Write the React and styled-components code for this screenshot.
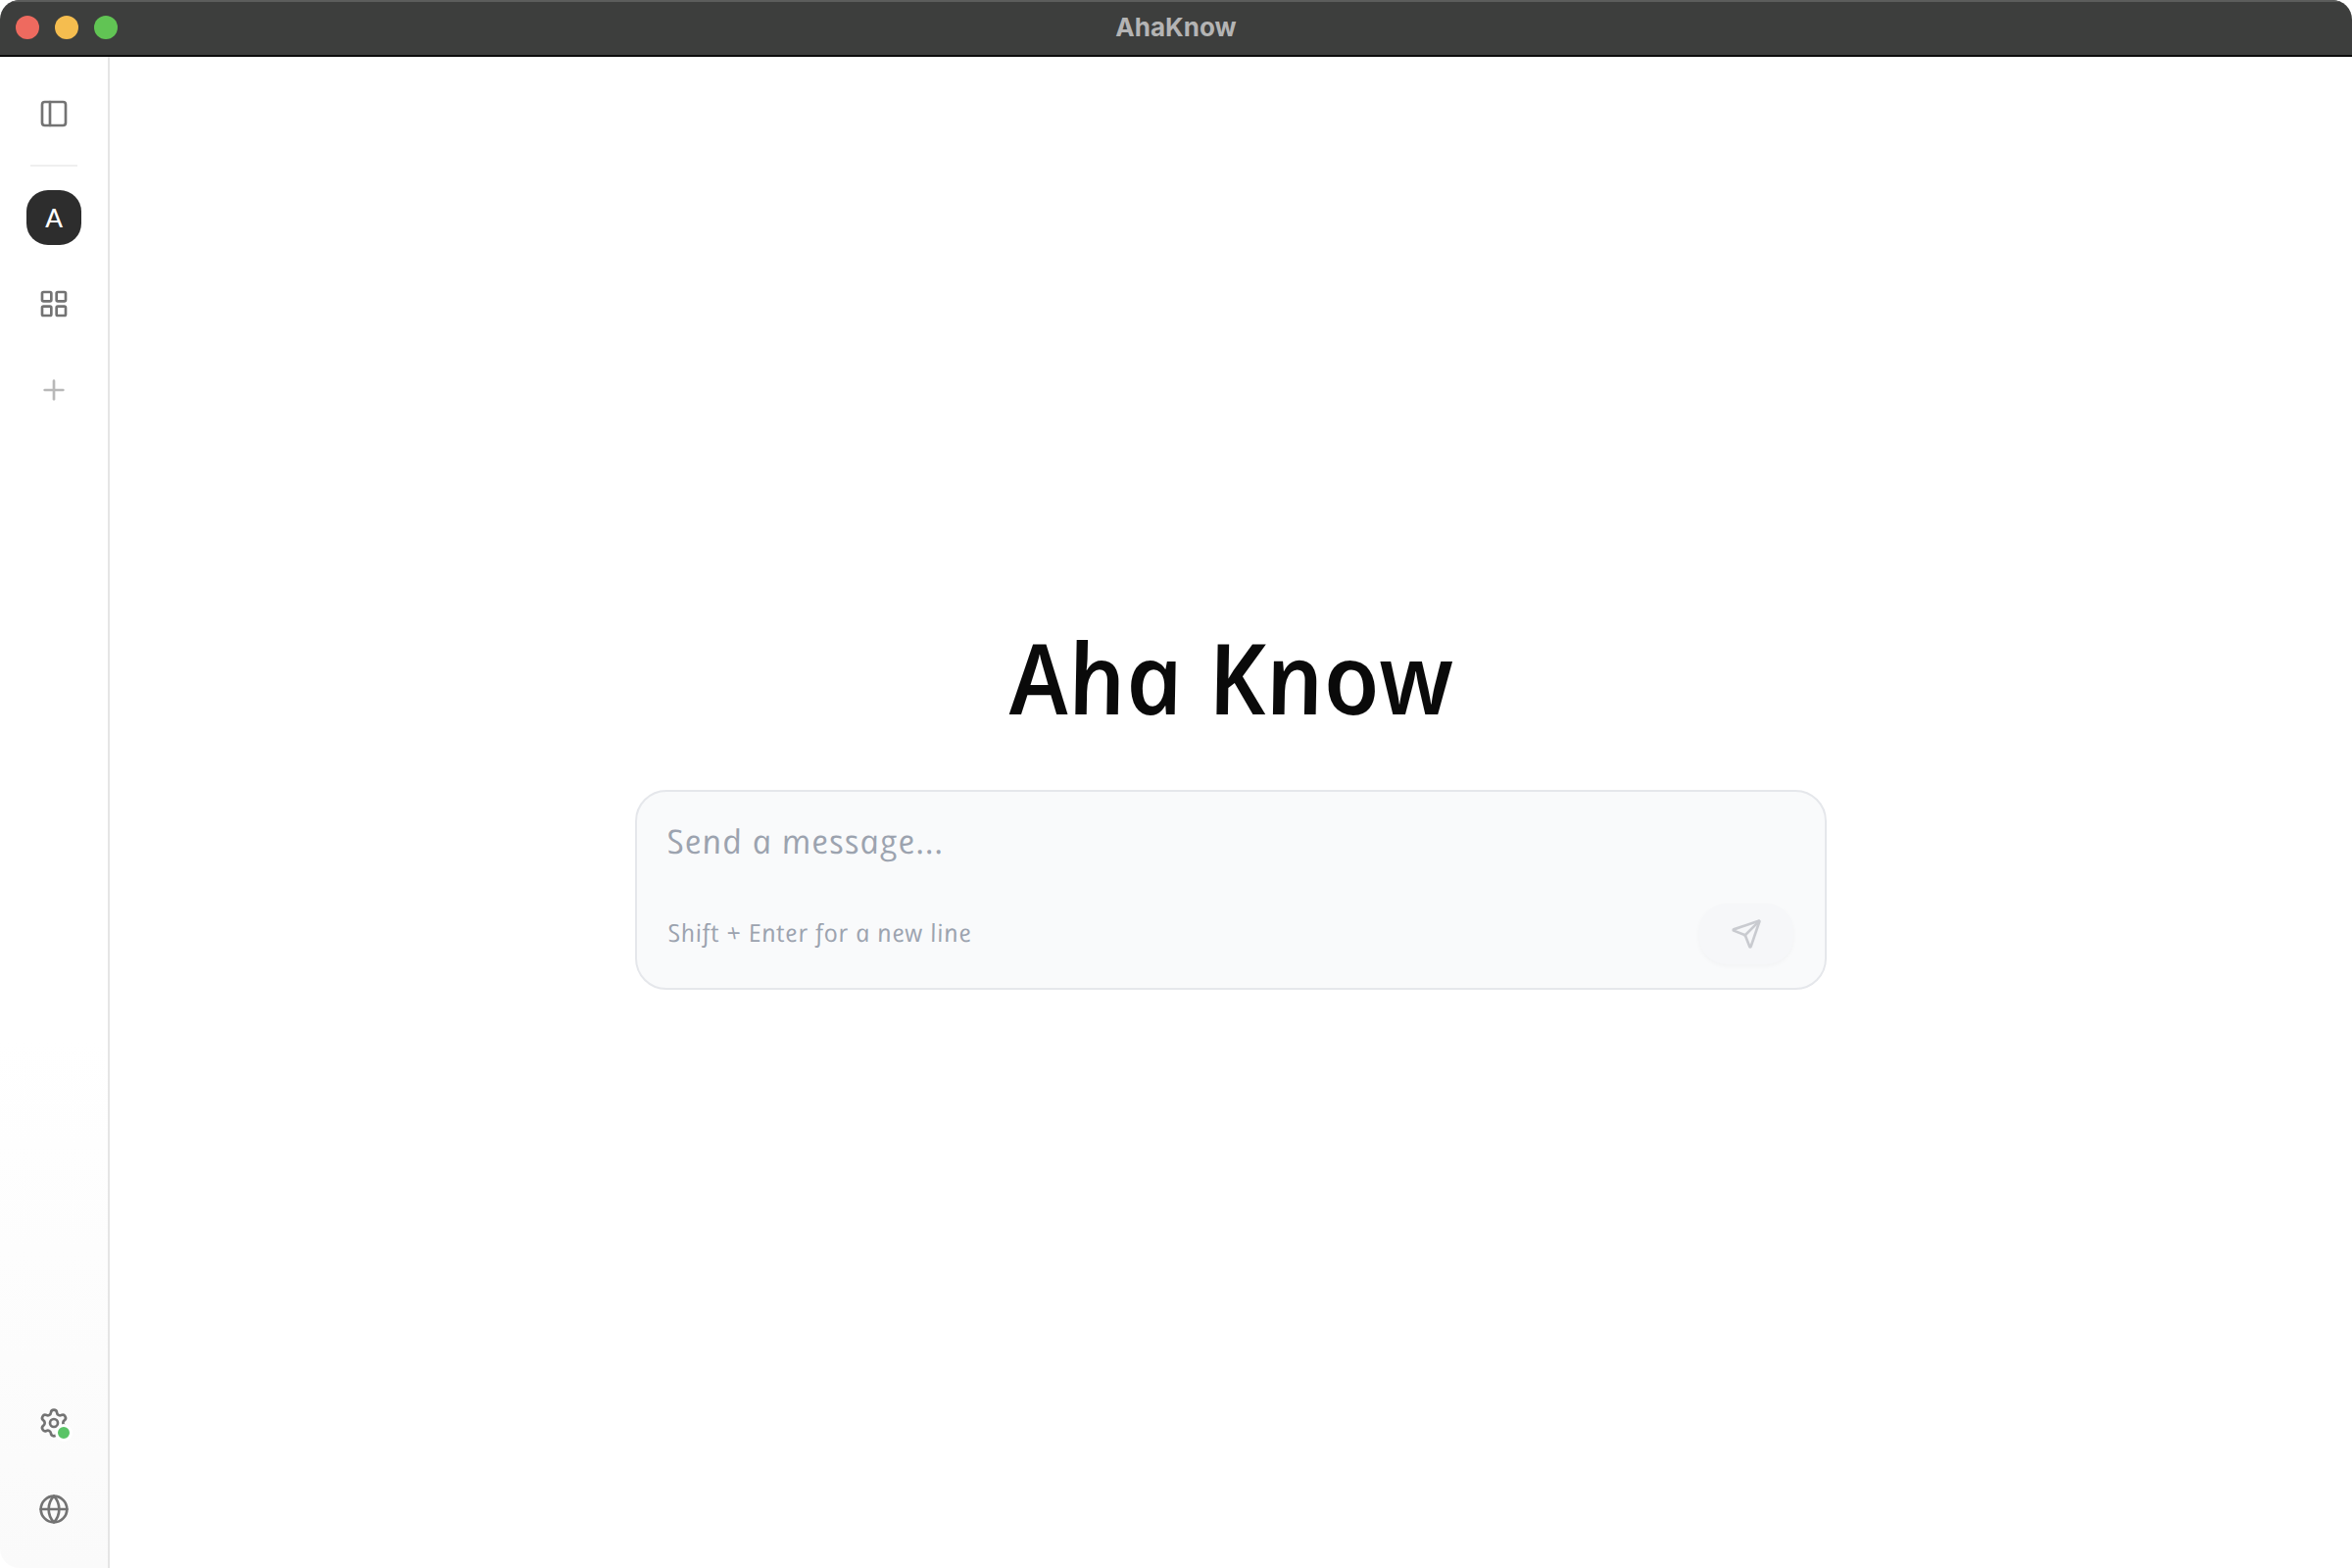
import React from "react";
import styled, { createGlobalStyle } from "styled-components";
import { Globe, LayoutGrid, PanelLeft, Plus, Send, Settings } from "lucide-react";

const GlobalStyle = createGlobalStyle`
  html, body {
    margin: 0;
    padding: 0;
    background: #fff;
  }
  * {
    box-sizing: border-box;
  }
`;

const App = () => {
  return (
    <Window>
      <GlobalStyle />
      <TitleBar>
        <Lights>
          <Light color="#ee6a5f" />
          <Light color="#f5bd4f" />
          <Light color="#61c454" />
        </Lights>
        <WindowTitle>AhaKnow</WindowTitle>
      </TitleBar>
      <Body>
        <Sidebar>
          <NavGroup>
            <NavButton>
              <PanelLeft size={32} strokeWidth={2} />
            </NavButton>
            <Divider />
            <Avatar>A</Avatar>
            <NavGroup>
              <NavButton>
                <LayoutGrid size={32} strokeWidth={2} />
              </NavButton>
              <NavButton muted>
                <Plus size={32} strokeWidth={2} />
              </NavButton>
            </NavGroup>
          </NavGroup>
          <NavGroup>
            <NavButton>
              <Settings size={32} strokeWidth={2} />
              <StatusDot />
            </NavButton>
            <NavButton>
              <Globe size={32} strokeWidth={2} />
            </NavButton>
          </NavGroup>
        </Sidebar>
        <Main>
          <Heading>Aha Know</Heading>
          <Composer>
            <Placeholder>Send a message...</Placeholder>
            <ComposerFooter>
              <Hint>Shift + Enter for a new line</Hint>
              <SendButton>
                <Send size={32} strokeWidth={2} />
              </SendButton>
            </ComposerFooter>
          </Composer>
        </Main>
      </Body>
    </Window>
  );
};

export default App;

const Window = styled.div`
  width: 2400px;
  height: 1600px;
  display: flex;
  flex-direction: column;
  background: #fff;
  overflow: hidden;
  border-radius: 20px 20px 0 0;
`;

const TitleBar = styled.header`
  position: relative;
  height: 58px;
  flex-shrink: 0;
  display: flex;
  align-items: center;
  justify-content: center;
  background: #3d3e3d;
  border-top: 2px solid #5c5d5c;
  border-bottom: 2px solid #0c0c0c;
`;

const Lights = styled.div`
  position: absolute;
  left: 16px;
  top: 14px;
  display: flex;
  gap: 16px;
`;

const Light = styled.span`
  width: 24px;
  height: 24px;
  border-radius: 50%;
  background: ${(p) => p.color};
`;

const WindowTitle = styled.div`
  font-family: Inter, "Liberation Sans", sans-serif;
  font-size: 26px;
  font-weight: 700;
  color: #b4b4b4;
  margin-top: -4px;
`;

const Body = styled.div`
  flex: 1;
  display: flex;
  min-height: 0;
`;

const Sidebar = styled.aside`
  width: 112px;
  flex-shrink: 0;
  display: flex;
  flex-direction: column;
  justify-content: space-between;
  align-items: center;
  padding: 30px 0 32px;
  background: linear-gradient(#ffffff 65%, #fafafa 100%);
  border-right: 2px solid #e5e5e5;
  border-bottom-left-radius: 20px;
`;

const NavGroup = styled.div`
  display: flex;
  flex-direction: column;
  align-items: center;
  gap: 32px;
`;

const NavButton = styled.div`
  position: relative;
  width: 56px;
  height: 56px;
  display: flex;
  align-items: center;
  justify-content: center;
  color: ${(p) => (p.muted ? "#b8b8b8" : "#737373")};
`;

const Divider = styled.div`
  width: 48px;
  height: 2px;
  margin: -8px 0 -8px;
  background: #efefef;
`;

const Avatar = styled.div`
  width: 56px;
  height: 56px;
  border-radius: 22px;
  display: flex;
  align-items: center;
  justify-content: center;
  background: #2d2d2d;
  color: #fff;
  font-family: Lato, "Liberation Sans", sans-serif;
  font-size: 26px;
  font-weight: 500;
`;

const StatusDot = styled.span`
  position: absolute;
  left: 52%;
  top: 52%;
  width: 18px;
  height: 18px;
  border-radius: 50%;
  background: #5ac467;
  border: 3px solid #fff;
`;

const Main = styled.main`
  flex: 1;
  display: flex;
  flex-direction: column;
  align-items: center;
  padding-top: 572px;
`;

const Heading = styled.h1`
  margin: 0 0 56px -4px;
  font-family: "Open Sans", "Noto Sans", sans-serif;
  font-size: 100px;
  font-style: italic;
  transform: skewX(11deg);
  line-height: 120px;
  font-weight: 600;
  color: #0a0a0a;
`;

const Composer = styled.div`
  width: 1216px;
  height: 204px;
  padding: 28px 32px 24px;
  display: flex;
  flex-direction: column;
  justify-content: space-between;
  background: #f9fafb;
  border: 2px solid #e5e7eb;
  border-radius: 32px;
`;

const Placeholder = styled.div`
  margin-left: 2px;
  font-family: "Open Sans", "Noto Sans", sans-serif;
  font-size: 34px;
  font-style: italic;
  letter-spacing: 1px;
  transform: skewX(11deg);
  transform-origin: left bottom;
  line-height: 44px;
  color: #9ca3af;
`;

const ComposerFooter = styled.div`
  display: flex;
  align-items: center;
  justify-content: space-between;
`;

const Hint = styled.div`
  margin: -4px 0 0 2px;
  font-family: "Open Sans", "Noto Sans", sans-serif;
  font-size: 25px;
  font-style: italic;
  letter-spacing: 0.7px;
  transform: skewX(11deg);
  transform-origin: left bottom;
  color: #9ca3af;
`;

const SendButton = styled.div`
  width: 96px;
  height: 62px;
  display: flex;
  align-items: center;
  justify-content: center;
  border-radius: 28px;
  background: #f6f7f9;
  box-shadow: 0 2px 5px rgba(0, 0, 0, 0.03);
  color: #c9cbd0;
`;
